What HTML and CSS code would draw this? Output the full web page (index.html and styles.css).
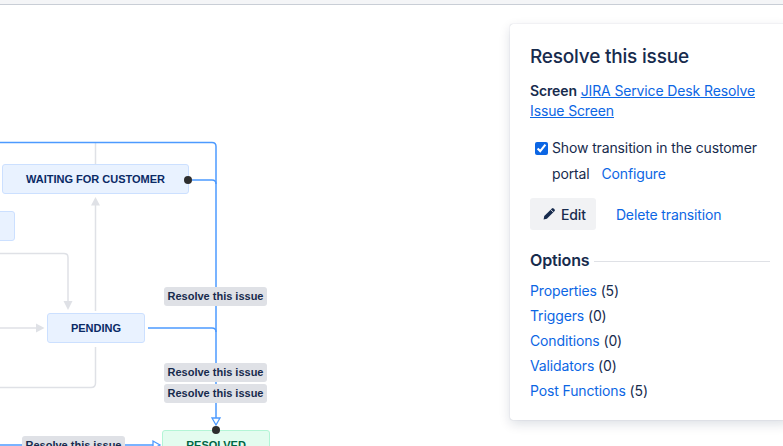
FILE: index.html
```html
<!DOCTYPE html>
<html lang="en">
<head>
    <meta charset="UTF-8">
    <title>Workflow - Resolve this issue</title>
    <link rel="stylesheet" href="styles.css">
</head>
<body>
    <div class="topbar"></div>

    <div class="main">
        <div class="canvas">
            <div class="node node-partial"></div>
            <div class="node node-waiting">WAITING FOR CUSTOMER</div>
            <div class="node node-pending">PENDING</div>
            <div class="node node-done node-resolved">RESOLVED</div>

            <svg class="edges" width="510" height="441" viewBox="0 5 510 441">
                <!-- grey transitions -->
                <g class="edge-grey">
                    <path d="M95.5 143 V164"/>
                    <path d="M95.5 311 V205"/>
                    <path d="M0 253.5 H64 Q68 253.5 68 257.5 V301"/>
                    <path d="M0 328 H36"/>
                    <path d="M95.5 347 V383 Q95.5 387.5 91 387.5 H0"/>
                </g>
                <g class="head-grey">
                    <polygon points="91,205.5 100,205.5 95.5,197"/>
                    <polygon points="63.5,301 72.5,301 68,310"/>
                    <polygon points="36,323.5 36,332.5 44.5,328"/>
                </g>
                <!-- resolve transitions -->
                <g class="edge-blue">
                    <path d="M0 142.5 H212 Q216 142.5 216 146.5 V418"/>
                    <path d="M192 180 H212 Q216 180 216 184"/>
                    <path d="M148 328 H212 Q216 328 216 332"/>
                    <path d="M0 445 H153"/>
                </g>
                <g class="head-blue">
                    <polygon points="212,418 220,418 216,425"/>
                    <polygon points="153,441 153,449 160,445"/>
                </g>
                <circle class="port" cx="188" cy="180" r="4"/>
                <circle class="port" cx="216" cy="430" r="4"/>
            </svg>

            <span class="edge-label label-1">Resolve this issue</span>
            <span class="edge-label label-2">Resolve this issue</span>
            <span class="edge-label label-3">Resolve this issue</span>
            <span class="edge-label label-4">Resolve this issue</span>
        </div>

        <aside class="panel">
            <h2 class="panel-title">Resolve this issue</h2>

            <p class="screen">
                <strong>Screen</strong>
                <a href="#">JIRA Service Desk Resolve Issue Screen</a>
            </p>

            <label class="portal-toggle">
                <input type="checkbox" checked>
                <span>Show transition in the customer portal <a href="#" class="configure">Configure</a></span>
            </label>

            <div class="actions">
                <button class="btn">
                    <svg width="14" height="14" viewBox="0 0 16 16">
                        <path d="M11.4 1.6 a1.3 1.3 0 0 1 1.8 0 l1.2 1.2 a1.3 1.3 0 0 1 0 1.8 L5.6 13.4 1.8 14.2 2.6 10.4 Z" fill="#172b4d"/>
                        <path d="M10 3 L13 6" stroke="#f1f2f4" stroke-width="1"/>
                    </svg>
                    Edit
                </button>
                <a href="#" class="link-action">Delete transition</a>
            </div>

            <div class="options-head">
                <h3>Options</h3>
                <span class="rule"></span>
            </div>

            <ul class="options">
                <li><a href="#">Properties</a> (5)</li>
                <li><a href="#">Triggers</a> (0)</li>
                <li><a href="#">Conditions</a> (0)</li>
                <li><a href="#">Validators</a> (0)</li>
                <li><a href="#">Post Functions</a> (5)</li>
            </ul>
        </aside>
    </div>
</body>
</html>
```

FILE: styles.css
```css
body {
    margin: 0;
    overflow: hidden;
    height: 446px;
    background: #fff;
    font-family: Inter, "Noto Sans", sans-serif;
    color: #172b4d;
}

.topbar {
    height: 4px;
    background: #f4f5f7;
    border-bottom: 1px solid #c9ced6;
}

.main {
    display: flex;
    align-items: flex-start;
}

/* 工作流画布 */
.canvas {
    position: relative;
    width: 510px;
    height: 441px;
    flex-shrink: 0;
    overflow: hidden;
    font-family: "Liberation Sans", Arial, sans-serif;
}

.edges {
    position: absolute;
    left: 0;
    top: 0;
}

.edge-grey path {
    fill: none;
    stroke: #dfe1e6;
    stroke-width: 1.5;
}

.head-grey polygon {
    fill: #dfe1e6;
}

.edge-blue path {
    fill: none;
    stroke: #4c9aff;
    stroke-width: 1.5;
}

.head-blue polygon {
    fill: #fff;
    stroke: #4c9aff;
    stroke-width: 1.3;
}

.port {
    fill: #2e2e2e;
}

.node {
    position: absolute;
    box-sizing: border-box;
    height: 30px;
    background: #e9f2ff;
    border: 1px solid #cce0ff;
    border-radius: 3px;
    color: #0a2a66;
    font-size: 11px;
    font-weight: bold;
    display: flex;
    align-items: center;
    justify-content: center;
}

.node-partial {
    left: -20px;
    top: 206px;
    width: 35px;
}

.node-waiting {
    left: 2px;
    top: 159px;
    width: 187px;
}

.node-pending {
    left: 47px;
    top: 308px;
    width: 98px;
}

.node-done {
    background: #e3fcef;
    border-color: #b3f5d6;
    color: #064;
}

.node-resolved {
    left: 162px;
    top: 425px;
    width: 108px;
}

.edge-label {
    position: absolute;
    box-sizing: border-box;
    width: 103px;
    height: 19px;
    line-height: 19px;
    text-align: center;
    background: #dfe1e6;
    border-radius: 3px;
    color: #172b4d;
    font-size: 11px;
    font-weight: bold;
    white-space: nowrap;
}

.label-1 { left: 164px; top: 282px; }
.label-2 { left: 164px; top: 358px; }
.label-3 { left: 164px; top: 379px; }
.label-4 { left: 22px; top: 431px; }

/* 右侧详情面板 */
.panel {
    box-sizing: border-box;
    flex-shrink: 0;
    width: 280px;
    margin-top: 19px;
    padding: 20px 20px 17px;
    background: #fff;
    border-radius: 3px;
    box-shadow:
        0 4px 12px rgba(9, 30, 66, 0.14),
        0 0 1px rgba(9, 30, 66, 0.3);
    font-size: 14px;
    letter-spacing: -0.13px;
}

.panel a {
    color: #0c66e4;
    text-decoration: none;
}

.panel-title {
    margin: 0;
    font-size: 19px;
    font-weight: 500;
    line-height: 26px;
    letter-spacing: -0.2px;
}

.screen {
    margin: 11px 0 0;
    line-height: 20px;
}

.screen strong {
    font-weight: 600;
}

.screen a {
    text-decoration: underline;
}

.portal-toggle {
    display: flex;
    align-items: flex-start;
    margin-top: 14px;
    line-height: 26px;
}

.portal-toggle input {
    flex-shrink: 0;
    width: 13px;
    height: 13px;
    margin: 7px 4px 0 5px;
    accent-color: #0c66e4;
}

.configure {
    margin-left: 8px;
}

.actions {
    display: flex;
    align-items: center;
    gap: 20px;
    margin-top: 11px;
}

.btn {
    display: flex;
    align-items: center;
    gap: 5px;
    height: 32px;
    padding: 0 10px 0 12px;
    border: none;
    border-radius: 3px;
    background: #f1f2f4;
    color: #172b4d;
    font-family: inherit;
    font-size: 14px;
    font-weight: 500;
    letter-spacing: inherit;
}

.options-head {
    display: flex;
    align-items: center;
    gap: 4px;
    margin-top: 18px;
}

.options-head h3 {
    margin: 0;
    font-size: 16px;
    font-weight: 600;
    line-height: 24px;
}

.rule {
    flex: 1;
    height: 1px;
    margin-top: 2px;
    background: #dfe1e6;
}

.options {
    list-style: none;
    margin: 6px 0 0;
    padding: 0;
    line-height: 25px;
}
```
